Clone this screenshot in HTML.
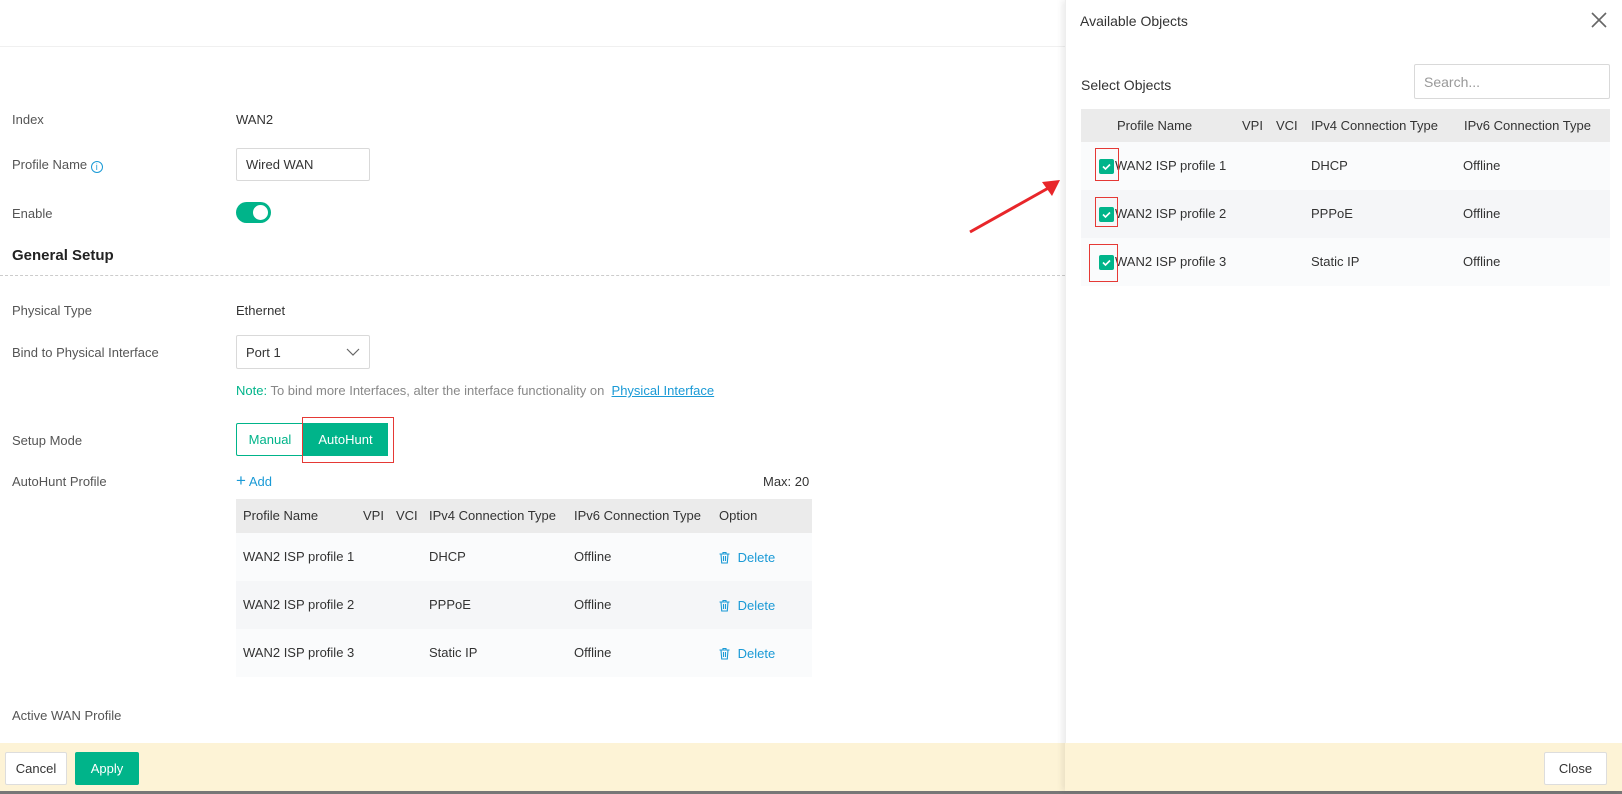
<!DOCTYPE html>
<html><head><meta charset="utf-8"><style>
*{box-sizing:border-box;margin:0;padding:0}
body{width:1622px;height:794px;position:relative;overflow:hidden;background:#fff;font-family:"Liberation Sans",sans-serif;font-size:13px;color:#333}
.a{position:absolute;white-space:nowrap}
.lbl{color:#555}
.inp{position:absolute;border:1px solid #d9d9d9;border-radius:2px;background:#fff;padding-left:9px;display:flex;align-items:center}
.th{background:#ebebeb}
.cb{position:absolute;width:15px;height:15px;background:#00b48a;border-radius:2px}
.rb{position:absolute;border:1px solid #e53935}
</style></head><body>
<div class="a" style="left:0;top:46px;width:1065px;height:1px;background:#f0f0f0"></div>
<div class="a lbl" style="left:12px;top:112px">Index</div>
<div class="a" style="left:236px;top:112px">WAN2</div>
<div class="a lbl" style="left:12px;top:157px">Profile Name <span style="color:#1a9ad6;display:inline-block;width:12px;height:12px;border:1px solid #1a9ad6;border-radius:50%;font-size:9px;text-align:center;line-height:10px;vertical-align:-1px">i</span></div>
<div class="inp" style="left:236px;top:148px;width:134px;height:33px">Wired WAN</div>
<div class="a lbl" style="left:12px;top:206px">Enable</div>
<div class="a" style="left:236px;top:202px;width:35px;height:21px;border-radius:11px;background:#00b48a"><div style="position:absolute;right:3px;top:3px;width:15px;height:15px;border-radius:50%;background:#fff"></div></div>
<div class="a" style="left:12px;top:247px;font-size:15px;font-weight:bold;color:#222">General Setup</div>
<div class="a" style="left:0;top:275px;width:1065px;border-top:1px dashed #ccc"></div>
<div class="a lbl" style="left:12px;top:303px">Physical Type</div>
<div class="a" style="left:236px;top:303px">Ethernet</div>
<div class="a lbl" style="left:12px;top:345px">Bind to Physical Interface</div>
<div class="inp" style="left:236px;top:335px;width:134px;height:34px">Port 1<svg style="position:absolute;right:9px;top:12px" width="14" height="9"><path d="M1 1l6 6 6-6" fill="none" stroke="#666" stroke-width="1.2"/></svg></div>
<div class="a" style="left:236px;top:383px;color:#888"><span style="color:#00b48a">Note:</span> To bind more Interfaces, alter the interface functionality on &nbsp;<span style="color:#1a9ad6;text-decoration:underline">Physical Interface</span></div>
<div class="a lbl" style="left:12px;top:433px">Setup Mode</div>
<div class="a" style="left:236px;top:423px;width:68px;height:33px;border:1px solid #00b48a;color:#00b48a;display:flex;align-items:center;justify-content:center;border-radius:2px 0 0 2px">Manual</div>
<div class="a" style="left:303px;top:423px;width:85px;height:33px;background:#00b48a;color:#fff;display:flex;align-items:center;justify-content:center">AutoHunt</div>
<div class="rb" style="left:302px;top:417px;width:92px;height:46px"></div>
<div class="a lbl" style="left:12px;top:474px">AutoHunt Profile</div>
<div class="a" style="left:236px;top:474px;color:#1a9ad6"><span style="font-size:17px;line-height:13px">+</span> Add</div>
<div class="a" style="left:763px;top:474px">Max: 20</div>
<div class="a th" style="left:236px;top:499px;width:576px;height:34px"></div>
<div class="a" style="left:236px;top:533px;width:576px;height:48px;background:#fafbfc"></div>
<div class="a" style="left:236px;top:581px;width:576px;height:48px;background:#f5f6f8"></div>
<div class="a" style="left:236px;top:629px;width:576px;height:48px;background:#fafbfc"></div>
<div class="a" style="left:243px;top:508px">Profile Name</div><div class="a" style="left:363px;top:508px">VPI</div><div class="a" style="left:396px;top:508px">VCI</div><div class="a" style="left:429px;top:508px">IPv4 Connection Type</div><div class="a" style="left:574px;top:508px">IPv6 Connection Type</div><div class="a" style="left:719px;top:508px">Option</div>
<div class="a" style="left:243px;top:549px">WAN2 ISP profile 1</div><div class="a" style="left:429px;top:549px">DHCP</div><div class="a" style="left:574px;top:549px">Offline</div>
<div class="a" style="left:243px;top:597px">WAN2 ISP profile 2</div><div class="a" style="left:429px;top:597px">PPPoE</div><div class="a" style="left:574px;top:597px">Offline</div>
<div class="a" style="left:243px;top:645px">WAN2 ISP profile 3</div><div class="a" style="left:429px;top:645px">Static IP</div><div class="a" style="left:574px;top:645px">Offline</div>
<div class="a" style="left:718px;top:550px;color:#1a9ad6"><svg width="13" height="13" style="vertical-align:-2px;margin-right:3px"><path d="M1.5 3h10M5 3V1.5h3V3M3 3l.7 9h5.6l.7-9M5.5 5v5M7.5 5v5" fill="none" stroke="#1a9ad6" stroke-width="1.1"/></svg> Delete</div>
<div class="a" style="left:718px;top:598px;color:#1a9ad6"><svg width="13" height="13" style="vertical-align:-2px;margin-right:3px"><path d="M1.5 3h10M5 3V1.5h3V3M3 3l.7 9h5.6l.7-9M5.5 5v5M7.5 5v5" fill="none" stroke="#1a9ad6" stroke-width="1.1"/></svg> Delete</div>
<div class="a" style="left:718px;top:646px;color:#1a9ad6"><svg width="13" height="13" style="vertical-align:-2px;margin-right:3px"><path d="M1.5 3h10M5 3V1.5h3V3M3 3l.7 9h5.6l.7-9M5.5 5v5M7.5 5v5" fill="none" stroke="#1a9ad6" stroke-width="1.1"/></svg> Delete</div>
<div class="a lbl" style="left:12px;top:708px">Active WAN Profile</div>
<div class="a" style="left:0;top:743px;width:1622px;height:48px;background:#fdf3d6"></div>
<div class="a" style="left:0;top:791px;width:1622px;height:3px;background:#777"></div>
<div class="a" style="left:5px;top:752px;width:62px;height:33px;background:#fff;border:1px solid #ddd;border-radius:2px;display:flex;align-items:center;justify-content:center">Cancel</div>
<div class="a" style="left:75px;top:752px;width:64px;height:33px;background:#00b48a;color:#fff;border-radius:2px;display:flex;align-items:center;justify-content:center">Apply</div>
<svg class="a" style="left:960px;top:170px" width="110" height="70"><path d="M10 62L92 16" stroke="#e8262a" stroke-width="3"/><path d="M100 10L82 12L92 26Z" fill="#e8262a"/></svg>
<div class="a" style="left:1065px;top:0;width:557px;height:791px;background:#fff;box-shadow:-3px 0 6px rgba(0,0,0,.08);border-left:1px solid #eee"></div>
<div class="a" style="left:1065px;top:743px;width:557px;height:48px;background:#fdf3d6"></div>
<div class="a" style="left:1080px;top:13px;font-size:14px;color:#333">Available Objects</div>
<svg class="a" style="left:1591px;top:12px" width="16" height="16"><path d="M1 1l14 14M15 1L1 15" stroke="#666" stroke-width="1.6"/></svg>
<div class="a" style="left:1081px;top:77px;font-size:14px">Select Objects</div>
<div class="inp" style="left:1414px;top:64px;width:196px;height:35px;color:#999;font-size:14px">Search...</div>
<div class="a th" style="left:1081px;top:109px;width:529px;height:33px"></div>
<div class="a" style="left:1081px;top:142px;width:529px;height:48px;background:#fafbfc"></div>
<div class="a" style="left:1081px;top:190px;width:529px;height:48px;background:#f5f6f8"></div>
<div class="a" style="left:1081px;top:238px;width:529px;height:48px;background:#fafbfc"></div>
<div class="a" style="left:1117px;top:118px">Profile Name</div><div class="a" style="left:1242px;top:118px">VPI</div><div class="a" style="left:1276px;top:118px">VCI</div><div class="a" style="left:1311px;top:118px">IPv4 Connection Type</div><div class="a" style="left:1464px;top:118px">IPv6 Connection Type</div>
<div class="a" style="left:1115px;top:158px">WAN2 ISP profile 1</div><div class="a" style="left:1311px;top:158px">DHCP</div><div class="a" style="left:1463px;top:158px">Offline</div>
<div class="a" style="left:1115px;top:206px">WAN2 ISP profile 2</div><div class="a" style="left:1311px;top:206px">PPPoE</div><div class="a" style="left:1463px;top:206px">Offline</div>
<div class="a" style="left:1115px;top:254px">WAN2 ISP profile 3</div><div class="a" style="left:1311px;top:254px">Static IP</div><div class="a" style="left:1463px;top:254px">Offline</div>
<div class="cb" style="left:1099px;top:159px"><svg width="15" height="15"><path d="M4 7.5l2.5 2.5 4.5-4.5" fill="none" stroke="#fff" stroke-width="1.6"/></svg></div>
<div class="cb" style="left:1099px;top:207px"><svg width="15" height="15"><path d="M4 7.5l2.5 2.5 4.5-4.5" fill="none" stroke="#fff" stroke-width="1.6"/></svg></div>
<div class="cb" style="left:1099px;top:255px"><svg width="15" height="15"><path d="M4 7.5l2.5 2.5 4.5-4.5" fill="none" stroke="#fff" stroke-width="1.6"/></svg></div>
<div class="rb" style="left:1095px;top:148px;width:24px;height:33px"></div>
<div class="rb" style="left:1095px;top:197px;width:23px;height:30px"></div>
<div class="rb" style="left:1089px;top:244px;width:29px;height:38px"></div>
<div class="a" style="left:1544px;top:752px;width:63px;height:33px;background:#fff;border:1px solid #ddd;border-radius:2px;display:flex;align-items:center;justify-content:center">Close</div>
</body></html>
